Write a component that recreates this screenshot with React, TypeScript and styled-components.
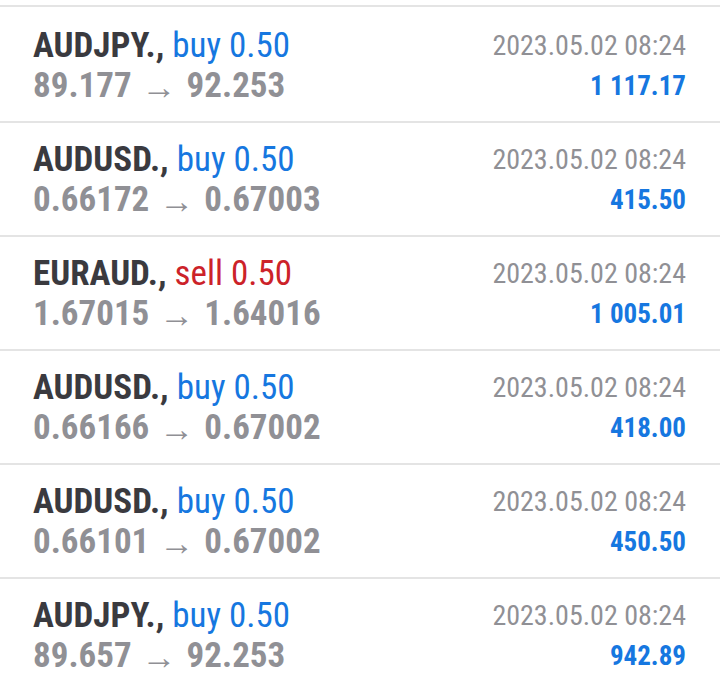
import React from 'react';
import styled, { createGlobalStyle } from 'styled-components';

const GlobalStyle = createGlobalStyle`
  html, body {
    margin: 0;
    padding: 0;
    background: #ffffff;
  }
  body {
    font-family: 'Roboto Condensed', 'Roboto', 'Liberation Sans', sans-serif;
    -webkit-font-smoothing: antialiased;
  }
`;

const List = styled.div`
  padding-top: 5px;
  width: 720px;
  height: 687px;
  overflow: hidden;
  box-sizing: border-box;
`;

const Row = styled.div`
  display: flex;
  justify-content: space-between;
  border-top: 2px solid #e4e4e4;
  height: 114px;
  box-sizing: border-box;
  padding: 0 34px 0 33px;

  &:first-child {
    height: 116px;
    padding-top: 2px;
  }
`;

const Left = styled.div`
  display: flex;
  flex-direction: column;
`;

const Right = styled.div`
  display: flex;
  flex-direction: column;
  align-items: flex-end;
`;

const Title = styled.div`
  font-size: 35px;
  line-height: 40px;
  margin-top: 17px;
  white-space: nowrap;
`;

const Symbol = styled.span`
  font-weight: 700;
  color: #3a3a3f;
`;

const Side = styled.span<{ $sell?: boolean }>`
  color: ${(p) => (p.$sell ? '#cc2229' : '#1677e0')};
`;

const Prices = styled.div`
  font-size: 35px;
  line-height: 40px;
  font-weight: 700;
  color: #909095;
  white-space: nowrap;
`;

const Arrow = styled.span`
  font-weight: 400;
  font-size: 35px;
  margin: 0 10px;
  vertical-align: -2px;
`;

const Time = styled.div`
  font-size: 28px;
  line-height: 40px;
  margin-top: 17px;
  color: #909095;
  white-space: nowrap;
`;

const Profit = styled.div`
  font-size: 27px;
  line-height: 40px;
  font-weight: 700;
  color: #1677e0;
  white-space: nowrap;
`;

interface Deal {
  symbol: string;
  side: 'buy' | 'sell';
  volume: string;
  open: string;
  close: string;
  time: string;
  profit: string;
}

const deals: Deal[] = [
  { symbol: 'AUDJPY.', side: 'buy', volume: '0.50', open: '89.177', close: '92.253', time: '2023.05.02 08:24', profit: '1 117.17' },
  { symbol: 'AUDUSD.', side: 'buy', volume: '0.50', open: '0.66172', close: '0.67003', time: '2023.05.02 08:24', profit: '415.50' },
  { symbol: 'EURAUD.', side: 'sell', volume: '0.50', open: '1.67015', close: '1.64016', time: '2023.05.02 08:24', profit: '1 005.01' },
  { symbol: 'AUDUSD.', side: 'buy', volume: '0.50', open: '0.66166', close: '0.67002', time: '2023.05.02 08:24', profit: '418.00' },
  { symbol: 'AUDUSD.', side: 'buy', volume: '0.50', open: '0.66101', close: '0.67002', time: '2023.05.02 08:24', profit: '450.50' },
  { symbol: 'AUDJPY.', side: 'buy', volume: '0.50', open: '89.657', close: '92.253', time: '2023.05.02 08:24', profit: '942.89' },
];

const App: React.FC = () => {
  return (
    <>
      <GlobalStyle />
      <List>
        {deals.map((d, i) => (
          <Row key={i}>
            <Left>
              <Title>
                <Symbol>{d.symbol},</Symbol>{' '}
                <Side $sell={d.side === 'sell'}>
                  {d.side} {d.volume}
                </Side>
              </Title>
              <Prices>
                {d.open}
                <Arrow>→</Arrow>
                {d.close}
              </Prices>
            </Left>
            <Right>
              <Time>{d.time}</Time>
              <Profit>{d.profit}</Profit>
            </Right>
          </Row>
        ))}
      </List>
    </>
  );
};

export default App;
